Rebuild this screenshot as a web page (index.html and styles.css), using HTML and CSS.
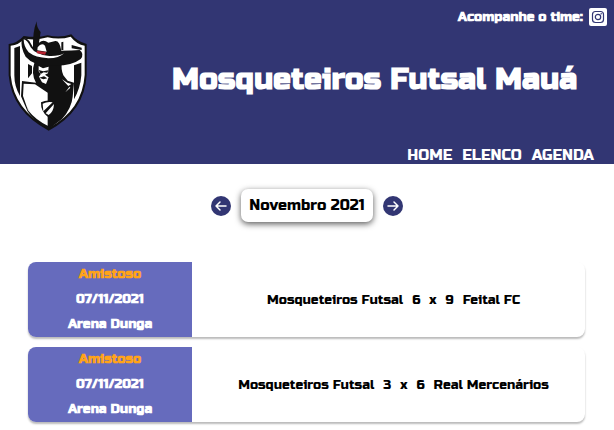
FILE: index.html
```html
<!DOCTYPE html>
<html lang="pt-BR">
<head>
<meta charset="utf-8">
<meta name="viewport" content="width=device-width, initial-scale=1">
<title>Mosqueteiros Futsal Mauá</title>
<link rel="stylesheet" href="styles.css">
</head>
<body>
<header class="header">
  <svg class="crest" viewBox="24 30 240 333" role="img" aria-label="Mosqueteiros">
    <path fill="#111" d="M26 102Q52 99 71 78Q112 84 143 76Q180 85 214 73Q231 95 260 102V195Q254 305 146 362Q35 304 26 196Z"/>
    <path fill="#fff" d="M32 107Q57 104 74 86Q110 92 143 82Q180 90 212 80Q230 103 254 107V195Q247 300 146 354Q42 300 32 196Z"/>
    <path fill="#111" d="M43 114L60 108V258Q43 230 43 196ZM215 105L245 113V120L215 115ZM222 166L244 158V196Q241 235 222 268ZM184 97L190 95V120H184ZM84 162L96 168V190L84 205Z"/>
    <path fill="#111" d="M66 213L108 218Q92 191 104 155L186 158Q182 176 190 196L203 212L222 218L218 260Q215 294 186 327L146 358Q104 337 82 303L63 259Z"/>
    <path fill="#fff" d="M71 221L105 223L143 248V347Q109 332 84 301L69 258ZM116 168L129 175L146 170L144 190L135 194L146 202L138 222L126 217L117 200L122 193L116 184ZM186 208L202 218L214 222L205 228L211 233L196 247L208 231L202 225Z"/>
    <path fill="#111" d="M116 180L130 184L145 181L142 188L131 187L122 192ZM118 203L132 199L142 205L130 208ZM80 289L90 306L83 295ZM123 277Q144 266 167 276Q169 306 143 320Q122 305 123 277Z"/>
    <path fill="#fff" d="M128 281Q142 274 158 277L130 304ZM162 282L137 310L146 315Q161 305 162 282Z"/>
    <path fill="#111" d="M66 87Q78 81 88 93L99 112Q98 63 110 34Q109 52 122 66L117 98Q130 87 145 98L166 93Q179 92 184 122Q217 122 239 120Q254 132 242 147Q211 171 147 166Q99 166 77 140Q60 110 66 87Z"/>
    <path fill="#fff" d="M71 88Q82 90 92 112Q106 134 148 138Q178 139 192 130Q178 145 145 145Q106 143 86 127Q71 110 71 88ZM113 112Q124 97 135 107L140 125L112 121Z"/>
    <path fill="#b72330" d="M110 122L139 126L135 134L111 130Z"/>
  </svg>
  <div class="heading">
    <div class="social"><span>Acompanhe o time:</span>
      <a href="#instagram" aria-label="Instagram"><svg class="instagram" viewBox="0 0 18 18" fill="none" stroke="#323673"><rect width="18" height="18" rx="2" fill="#fff" stroke="none"/><rect x="3.5" y="3.5" width="11" height="11" rx="3" stroke-width="1.2"/><circle cx="9" cy="9" r="2.7" stroke-width="1.2"/><circle cx="12.2" cy="5.8" r=".7" fill="#323673" stroke="none"/></svg></a>
    </div>
    <h1>Mosqueteiros Futsal Mauá</h1>
    <nav><a href="#home">HOME</a><a href="#elenco">ELENCO</a><a href="#agenda">AGENDA</a></nav>
  </div>
</header>
<main>
  <div class="month">
    <button type="button" aria-label="Mês anterior"><svg viewBox="0 0 20 20"><path d="M15 10H5M9 6L5 10L9 14"/></svg></button>
    <h2>Novembro 2021</h2>
    <button type="button" aria-label="Próximo mês"><svg viewBox="0 0 20 20"><path d="M5 10H15M11 6L15 10L11 14"/></svg></button>
  </div>
  <section class="games">
    <article class="game">
      <div class="details"><span class="kind">Amistoso</span><span>07/11/2021</span><span>Arena Dunga</span></div>
      <div class="score"><span>Mosqueteiros Futsal</span><span>6</span><span>x</span><span>9</span><span>Feital FC</span></div>
    </article>
    <article class="game">
      <div class="details"><span class="kind">Amistoso</span><span>07/11/2021</span><span>Arena Dunga</span></div>
      <div class="score"><span>Mosqueteiros Futsal</span><span>3</span><span>x</span><span>6</span><span>Real Mercenários</span></div>
    </article>
  </section>
</main>
</body>
</html>
```
FILE: styles.css
```css
* { box-sizing: border-box; }
body { margin: 0; background: #fff; color: #000; font-family: "Russo One", Inter, sans-serif; font-size: 13px; }
h1, h2 { margin: 0; }
a { color: inherit; text-decoration: none; }
.header { display: flex; padding: 7px 7px 0 8px; background: #323673; color: #fff; }
.crest { flex: none; width: 80px; height: 111px; margin-top: 13px; }
.heading { flex: 1; display: flex; flex-direction: column; }
.social { display: flex; align-items: center; justify-content: flex-end; gap: 6px; height: 19px; font-weight: 700; }
.social a { display: flex; }
.instagram { width: 18px; height: 18px; }
h1 { margin-top: 33px; padding-left: 54px; text-align: center; font-size: 30px; line-height: 40px; }
nav { display: flex; justify-content: flex-end; gap: 10px; margin-top: 47px; padding-right: 13px; font-size: 15px; line-height: 18px; }
.month { display: flex; align-items: center; justify-content: center; gap: 10px; padding-top: 25px; }
.month h2 { padding: 0 8px; border-radius: 7px; box-shadow: 0 2px 6px #000000a6; font-size: 15px; line-height: 33px; font-weight: 400; }
.month button { width: 20px; height: 20px; padding: 0; border: 0; border-radius: 50%; background: #323673; }
.month svg { display: block; width: 20px; height: 20px; fill: none; stroke: #fff; stroke-width: 1.5; stroke-linecap: round; stroke-linejoin: round; }
.games { display: grid; gap: 10px; margin: 40px 29px 8px 28px; }
.game { display: flex; overflow: hidden; border-radius: 8px; box-shadow: 0 2px 2px #00000045; }
.details { display: flex; flex-direction: column; flex: 0 0 164px; align-items: center; background: #666bbd; color: #fff; line-height: 25px; font-weight: 700; }
.kind { color: #ffa31a; }
.score { flex: 1; display: flex; align-items: center; justify-content: center; gap: 9px; padding-left: 10px; }
```
